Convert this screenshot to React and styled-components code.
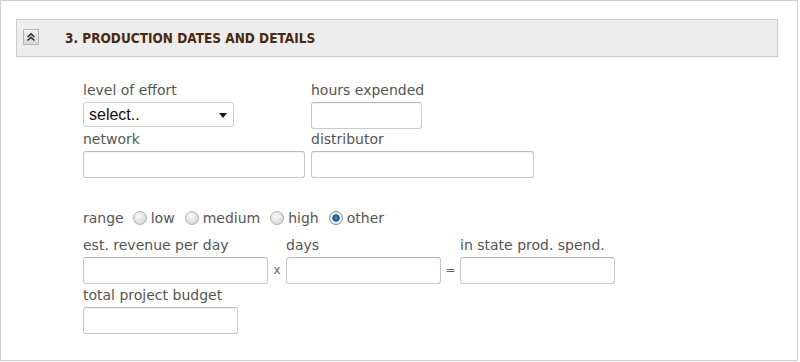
import React, { useState } from 'react'
import styled, { createGlobalStyle } from 'styled-components'

const Global = createGlobalStyle`
  html, body { margin: 0; padding: 0; background: #fff; }
  body { font-family: "DejaVu Sans", Verdana, sans-serif; }
`

const Frame = styled.div`
  width: 798px; height: 361px;
  box-sizing: border-box;
  border: 1px solid #cfcfcf;
  padding: 18px 0 0 15px;
`
const Header = styled.div`
  width: 762px; height: 38px;
  box-sizing: border-box;
  display: flex; align-items: center;
  background: #ededed;
  border: 1px solid #cdcdcd;
  box-shadow: 1px 1px 1px rgba(0,0,0,0.04);
  padding-left: 6px;
`
const Toggle = styled.span`
  width: 16px; height: 16px;
  box-sizing: border-box;
  display: flex; align-items: center; justify-content: center;
  border: 1px solid #b4b4b4;
  background: linear-gradient(#f2f2f2, #d9d9d9);
  margin-top: -2px;
`
const Title = styled.h3`
  margin: 0 0 0 26px;
  font-family: "DejaVu Sans Condensed", "DejaVu Sans", sans-serif;
  font-stretch: condensed;
  font-size: 13.5px; font-weight: bold;
  color: #4a2a0e;
`

const Form = styled.div`
  padding: 23px 0 0 67px;
`
const Row = styled.div`
  display: flex; align-items: flex-start; gap: 6px;
  margin-top: ${p => p.$top || 0}px;
`
const Field = styled.div`
  display: flex; flex-direction: column; gap: 2px;
`
const Label = styled.label`
  font-size: 14px; line-height: 20px; color: #555;
  white-space: nowrap;
`
const Input = styled.input`
  width: ${p => p.$w}px; height: 27px;
  box-sizing: border-box;
  border: 1px solid #c8c8c8;
  border-top-color: #b9b9b9;
  border-radius: 3px;
  box-shadow: inset 0 1px 1px rgba(0,0,0,0.05);
  background: #fff;
  margin: 0;
  &:focus { outline: none; border-color: #999; }
`
const SelectBox = styled.div`
  position: relative;
  width: 151px; height: 25px;
  box-sizing: border-box;
  border: 1px solid #cbcbcb;
  border-radius: 3px;
  background: #fff;
  select {
    appearance: none; -webkit-appearance: none;
    width: 100%; height: 100%;
    border: none; background: transparent;
    font-family: "Liberation Sans", Arial, sans-serif;
    font-size: 16px; color: #111;
    padding: 0 0 0 5px;
    outline: none;
  }
`
const Caret = styled.span`
  position: absolute; right: 6px; top: 10px;
  width: 0; height: 0;
  border-left: 4px solid transparent;
  border-right: 4px solid transparent;
  border-top: 5px solid #111;
  pointer-events: none;
`
const Op = styled.span`
  align-self: flex-end;
  width: ${p => p.$w}px; height: 27px; line-height: 27px;
  margin: 0 -6px;
  text-align: center;
  font-size: 12px; color: #666;
`
const RangeRow = styled.div`
  display: flex; align-items: center;
  margin: 30px 0 7px;
  font-size: 14px; line-height: 20px; color: #555;
`
const Option = styled.label`
  display: flex; align-items: center;
  margin-left: ${p => p.$first ? 9 : 10}px;
  cursor: pointer;
`
const Radio = styled.input`
  appearance: none; -webkit-appearance: none;
  width: 14px; height: 14px; margin: 0 4px 0 0;
  border-radius: 50%;
  border: 1px solid #b0b0b0;
  background: radial-gradient(circle at 40% 35%, #fafafa 0%, #e2e2e2 55%, #c4c4c4 100%);
  &:checked {
    background: radial-gradient(circle at 50% 50%, #3b9ad6 0%, #0d5f96 32%, #0b4a78 40%, #f2f2f2 46%, #d6d6d6 100%);
    border-color: #8a8a8a;
  }
`

const ranges = ['low', 'medium', 'high', 'other']

function ChevronsUp() {
  return (
    <svg width="10" height="10" viewBox="0 0 10 10">
      <path d="M1.5 5 L5 1.8 L8.5 5 M1.5 8.5 L5 5.3 L8.5 8.5" fill="none" stroke="#333" strokeWidth="1.6" />
    </svg>
  )
}

export default function App() {
  const [range, setRange] = useState('other')
  return (
    <>
      <Global />
      <Frame>
        <Header>
          <Toggle><ChevronsUp /></Toggle>
          <Title>3. PRODUCTION DATES AND DETAILS</Title>
        </Header>
        <Form>
          <Row>
            <Field style={{ width: 222 }}>
              <Label>level of effort</Label>
              <SelectBox>
                <select defaultValue="">
                  <option value="">select..</option>
                  <option>low</option>
                  <option>medium</option>
                  <option>high</option>
                </select>
                <Caret />
              </SelectBox>
            </Field>
            <Field>
              <Label>hours expended</Label>
              <Input $w={111} />
            </Field>
          </Row>
          <Row>
            <Field>
              <Label>network</Label>
              <Input $w={222} />
            </Field>
            <Field>
              <Label>distributor</Label>
              <Input $w={223} />
            </Field>
          </Row>
          <RangeRow>
            range
            {ranges.map((r, i) => (
              <Option key={r} $first={i === 0}>
                <Radio type="radio" name="range" checked={range === r} onChange={() => setRange(r)} />
                {r}
              </Option>
            ))}
          </RangeRow>
          <Row>
            <Field>
              <Label>est. revenue per day</Label>
              <Input $w={185} />
            </Field>
            <Op $w={18}>x</Op>
            <Field>
              <Label>days</Label>
              <Input $w={155} />
            </Field>
            <Op $w={19}>=</Op>
            <Field>
              <Label>in state prod. spend.</Label>
              <Input $w={155} />
            </Field>
          </Row>
          <Row $top={1}>
            <Field>
              <Label>total project budget</Label>
              <Input $w={155} />
            </Field>
          </Row>
        </Form>
      </Frame>
    </>
  )
}
